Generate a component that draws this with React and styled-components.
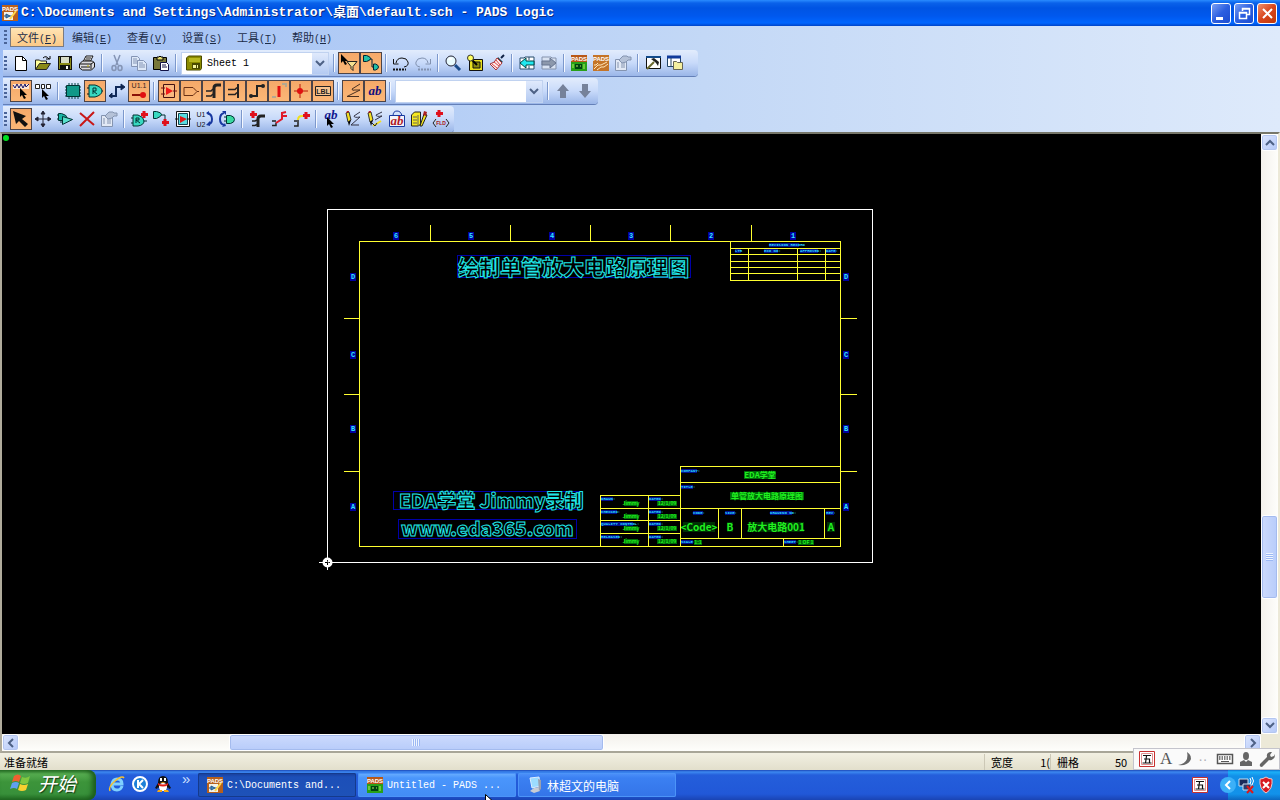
import React, { useState } from "react";
import styled, { createGlobalStyle } from "styled-components";

const mono = `"Liberation Mono", "Noto Sans CJK SC", monospace`;
const cjk = `"Noto Sans CJK SC", "Liberation Sans", sans-serif`;

/* ---------- icons, all on a 16 x 16 grid ---------- */

const cursor = (x, y) => (
  <path d={`M${x} ${y}v9l2-2 2 4 2-1-2-3h3z`} fill="#000" />
);
const plus = (x, y) => (
  <path d={`M${x} ${y}v7M${x - 3} ${y + 3.5}h7`} stroke="#e0101c" strokeWidth="3" />
);
const pencil = (
  <g>
    <path d="M1 2l3-1 2 8-3 2z" fill="#f5e020" stroke="#333" />
    <path d="M3 11l3-2-2 6z" fill="#000" />
    <path d="M1 2l3-1v-1h-2z" fill="#b22" />
  </g>
);

const icons = {
  newFile: (
    <g>
      <path d="M2.5 1.5h7l4 4v10h-11z" fill="#fff" stroke="#000" />
      <path d="M9.5 1.5v4h4" fill="none" stroke="#000" />
    </g>
  ),
  open: (
    <g>
      <path d="M0.5 14V5h4l1 1h6v3" fill="#ffff9a" stroke="#222" />
      <path d="M0.5 14.5l4-6h11l-4 6z" fill="#8a8a18" stroke="#222" />
      <path d="M8 3q3-3 6 1m1-3v3h-4" fill="none" stroke="#000" />
    </g>
  ),
  save: (
    <g>
      <path d="M1 1h14v14H1z" fill="#111" />
      <path d="M2 2h1v12H2zM13 3h1v11h-1z" fill="#8a8a18" />
      <path d="M4 2h8v6H4z" fill="#d8dcc8" />
      <path d="M3 8h10v2H3z" fill="#8a8a18" />
      <path d="M9 11h2v3H9z" fill="#fff" />
    </g>
  ),
  print: (
    <g stroke="#111" fill="#fff">
      <path d="M4 7l3-6h7l-3 6z" />
      <path d="M7 3h5M6 5h5" />
      <path d="M0.5 9l3-3h10l2 2v4l-3 3h-9l-3-2z" fill="#dcdce0" />
      <path d="M1 9h11l3-2M12 9v5M2 12h9" fill="none" />
      <path d="M8 11h2" stroke="#c0b000" />
    </g>
  ),
  cut: (
    <g fill="none" stroke="#8494b4" strokeWidth="1.5">
      <path d="M5 0l4 10M11 0l-4 10" />
      <ellipse cx="5" cy="13" rx="2" ry="2.5" />
      <ellipse cx="11" cy="13" rx="2" ry="2.5" />
    </g>
  ),
  copy: (
    <g fill="#dde8f8" stroke="#8494b4">
      <path d="M0.5 1.5h6l2 2v8h-8z" />
      <path d="M2 4h4M2 6h5M2 8h4" />
      <path d="M6.5 5.5h6l3 3v7h-9z" />
      <path d="M8 8h4M8 10h6M8 12h6" />
    </g>
  ),
  paste: (
    <g stroke="#000">
      <path d="M0.5 2.5h13v12h-13z" fill="#77773a" />
      <path d="M4 5V2h2l1-1 1 1h2v3z" fill="#e8e070" />
      <path d="M7.5 7.5h6l2 2v6h-8z" fill="#fff" stroke="#114" />
      <path d="M9 10h4M9 12h5" stroke="#114" />
    </g>
  ),
  sheet: (
    <g>
      <path d="M0.5 3l2-2h13v12l-1 2h-14z" fill="#8c8c00" stroke="#4a4a00" />
      <path d="M3 3h11v4H3z" fill="#b8b820" />
      <path d="M6 8h8v6H6z" fill="#4a4a00" />
      <path d="M7 10h3v3H7zM11 10h1v3h-1z" fill="#f5f5a0" />
    </g>
  ),
  filter: (
    <g>
      {cursor(0, -1)}
      <path d="M6 6.5h10l-4 5v4l-2-2v-2z" fill="#f5e090" stroke="#222" />
    </g>
  ),
  nets: (
    <g stroke="#023">
      <path d="M0.5 0.5h3q4 1 4 3t-4 3h-3z" fill="#20c0a8" />
      <path d="M7 4h2v8h2" fill="none" />
      <path d="M10.5 9h2q3 1 3 3t-3 3h-2z" fill="#20c0a8" />
    </g>
  ),
  undo: (
    <g fill="none" stroke="#111">
      <path d="M3 8q1-5 6-5t6 4-4 5" />
      <path d="M0.5 4v5h5" />
      <path d="M0 14.5h13" strokeWidth="2" strokeDasharray="2 1" />
    </g>
  ),
  redo: (
    <g fill="none" stroke="#8292b0">
      <path d="M13 8q-1-5-6-5t-6 4 4 5" />
      <path d="M15.5 4v5h-5" />
      <path d="M3 14.5h13" strokeWidth="2" strokeDasharray="2 1" />
    </g>
  ),
  zoom: (
    <g>
      <path d="M10 10l5 5" stroke="#174a8a" strokeWidth="3" />
      <circle cx="6" cy="6" r="5" fill="#e8fbff" stroke="#223" />
      <path d="M4 5q1-2 3-1" fill="none" stroke="#fff" strokeWidth="2" />
    </g>
  ),
  board: (
    <g>
      <path d="M2.5 4.5h13v11h-13z" fill="#e8e020" stroke="#111" />
      <path d="M6 7h7v6H6z" fill="#8a8a10" stroke="#111" />
      <path d="M5 5l5 5" stroke="#000" strokeWidth="2" />
      <circle cx="3.5" cy="3" r="3" fill="#ffff60" stroke="#333" />
    </g>
  ),
  brush: (
    <g>
      <path d="M12 3l3-3" stroke="#124" strokeWidth="2" />
      <path d="M9 2l5 5-2 1-4-4z" fill="#245" />
      <path d="M8 3l5 5-6 7-6-6q5-1 7-6z" fill="#fbeaec" stroke="#a33" />
      <path d="M3 9l5 4M5 7l5 4M7 5l4 5" stroke="#d44" />
    </g>
  ),
  back: (
    <g>
      <path d="M1 3h4l1-1h9v12H1z" fill="#fff" stroke="#244a6a" />
      <path d="M1 8l6-5v3h8v4H7v3z" fill="#20e8f0" stroke="#044" />
      <path d="M10 2v3M10 11v3" stroke="#244a6a" />
    </g>
  ),
  forward: (
    <g>
      <path d="M1 2h9l1 1h4v11H1z" fill="#d8e2f2" stroke="#8492ac" />
      <path d="M15 8L9 3v3H1v4h8v3z" fill="#8c98ac" stroke="#667490" />
    </g>
  ),
  padsLayout: (
    <g>
      <path d="M0 0h16v16H0z" fill="#b85818" />
      <path d="M0 7h16v9H0z" fill="#28a018" />
      <path d="M4 9h7v5H4z" fill="#041" />
      <path d="M2 9v4M13 9v5M5 11h2M9 11h1" stroke="#b0f060" />
      <text x="8" y="6" textAnchor="middle" fontSize="6" fontWeight="700" fill="#fff">
        PADS
      </text>
    </g>
  ),
  padsRouter: (
    <g>
      <path d="M0 0h16v16H0z" fill="#c47428" />
      <path d="M1 14l4-4h3l6-3M4 15l4-3h3l4-3M1 10h2l2-2" fill="none" stroke="#ffe6b8" />
      <text x="8" y="6" textAnchor="middle" fontSize="6" fontWeight="700" fill="#fff">
        PADS
      </text>
    </g>
  ),
  padsLogic: (
    <g>
      <path d="M0 0h16v16H0z" fill="#b8601c" />
      <path d="M2 7h9v8H2z" fill="#f2f2ea" />
      <path d="M4 9l4 2-4 2zM2 11h2M8 11h2" fill="#4a90c0" stroke="#258" />
      <path d="M8 14l6-8" stroke="#ffd84a" strokeWidth="2" />
      <text x="8" y="6" textAnchor="middle" fontSize="6" fontWeight="700" fill="#fff">
        PADS
      </text>
    </g>
  ),
  properties: (
    <g fill="#e2e9f5" stroke="#8494b0">
      <path d="M0.5 4.5h11v11h-11z" />
      <path d="M2 8h2M6 8h4M2 10h2M6 10h4M2 12h2M6 12h4" />
      <path d="M4 5l4-4h4l1 1h3v3h-3l-2 2-4 1-2-2z" fill="#b5c2d8" />
    </g>
  ),
  hammer: (
    <g>
      <path d="M1.5 1.5h14v12h-14z" fill="#fff" stroke="#111" />
      <path d="M1 2h15" stroke="#124a8a" strokeWidth="2" />
      <path d="M2 14l7-7" stroke="#6a6a30" strokeWidth="2" />
      <path d="M6 4l3-1 5 4-1 4-2-3-1-1z" fill="#222" />
    </g>
  ),
  windows: (
    <g>
      <path d="M0.5 1.5h13v10h-13z" fill="#fff" stroke="#246" />
      <path d="M0 2h14" stroke="#103a9a" strokeWidth="3" />
      <path d="M4 3v8" stroke="#246" />
      <path d="M6.5 14.5v-8h3l1 1h5v7z" fill="#f5f0a0" stroke="#665" />
    </g>
  ),
  selectAny: (
    <g>
      <path d="M0 1h16v5H0z" fill="#fff" opacity="0.7" />
      <path d="M0 2l2 3 2-4 2 4 2-4 2 4 2-4 1 3 3-3" fill="none" stroke="#12126a" />
      {cursor(7, 5)}
    </g>
  ),
  selectParts: (
    <g>
      <path d="M0.5 1.5h4v4h-4zM6.5 1.5h3v4h-3zM11.5 1.5h4v4h-4z" fill="#fff" stroke="#222" />
      {cursor(7, 6)}
    </g>
  ),
  chip: (
    <g>
      <path d="M4 0v16M7 0v16M10 0v16M13 0v16M0 4h16M0 7h16M0 10h16M0 13h16" stroke="#044" />
      <path d="M1.5 2.5h13v11h-13z" fill="#109888" stroke="#033" />
    </g>
  ),
  gateR: (
    <g>
      <path d="M0 5h3M0 11h3M14 8h2" stroke="#111" />
      <path d="M2 2h6q7 2 7 6t-7 6H2z" fill="#38d8c0" stroke="#033" />
      <path d="M6 11V5h3v3H6l4 3" fill="none" stroke="#033" />
    </g>
  ),
  net: (
    <g fill="none" stroke="#102a5a">
      <path d="M1 13h6V4h6" strokeWidth="2" />
      <path d="M3 10l-3 3 3 2zM12 1l4 3-4 3z" fill="#124" />
    </g>
  ),
  pinName: (
    <g>
      <text x="8" y="5" textAnchor="middle" fontSize="7" fill="#322">
        U1.1
      </text>
      <path d="M1 12h10" stroke="#8a1208" strokeWidth="2" />
      <circle cx="12" cy="12" r="3" fill="#e01010" />
    </g>
  ),
  hier: (
    <g>
      <path d="M2.5 1.5h11v13h-11z" fill="#f8b880" stroke="#411" />
      <path d="M0 5h4M0 11h4M12 8h4" stroke="#711" />
      <path d="M5 4l7 4-7 4z" fill="#f01818" />
    </g>
  ),
  offPage: <path d="M1 4.5h9l4 4-4 4H1zM14 8.5h2" fill="none" stroke="#6a3014" />,
  bus: (
    <g fill="none" stroke="#222">
      <path d="M9 15V5q0-3 3-3h4" strokeWidth="3" />
      <path d="M1 8h5l2-2M1 13h5l2-2" strokeWidth="1.5" />
    </g>
  ),
  busSplit: (
    <g fill="none" stroke="#222">
      <path d="M11 1v14" strokeWidth="2" />
      <path d="M1 6.5h7l2-2M1 11.5h7l2-2" strokeWidth="1.5" />
    </g>
  ),
  wire: (
    <g fill="none" stroke="#222">
      <path d="M2 13h6V3h6" strokeWidth="2" />
      <circle cx="2" cy="13" r="2" fill="#222" stroke="none" />
      <circle cx="14" cy="3" r="2" fill="#222" stroke="none" />
    </g>
  ),
  pin: (
    <g>
      <path d="M8 3v11" stroke="#e01010" strokeWidth="3" />
      <path d="M11 1h4v3M1 14h4" stroke="#b4a890" strokeWidth="2" fill="none" />
    </g>
  ),
  junction: (
    <g>
      <path d="M7 1v14M1 8h14" stroke="#b81808" />
      <circle cx="7" cy="8" r="3" fill="#e01010" />
    </g>
  ),
  label: (
    <g>
      <path d="M0.5 3.5h15v9h-15z" fill="#f8c490" stroke="#222" />
      <text x="8" y="11" textAnchor="middle" fontSize="7" fontWeight="700" fill="#222">
        LBL
      </text>
    </g>
  ),
  lines: <path d="M15 1L7 6q0 2 3 1h5L2 13.5h12" fill="none" stroke="#4a3020" />,
  ab: (
    <text
      x="8"
      y="12"
      textAnchor="middle"
      fontFamily="Liberation Serif, serif"
      fontSize="13"
      fontStyle="italic"
      fontWeight="700"
      fill="#101080"
    >
      ab
    </text>
  ),
  up: <path d="M8 1l6 7h-3v7H5V8H2z" fill="#76829a" />,
  down: <path d="M8 15l6-7h-3V1H5v7H2z" fill="#76829a" />,
  arrow: <path d="M0 0l3 13 3-3 6 6 3-3-6-5 4-3z" fill="#111" />,
  move: (
    <g stroke="#223" fill="#223">
      <path d="M8 1v14M1 8h14" />
      <path d="M8 0l2 3H6zM8 16l2-3H6zM0 8l3-2v4zM16 8l-3-2v4z" />
    </g>
  ),
  gates: (
    <g>
      <path d="M1.5 2.5h3q5 1 6 5l-5 2h-4z" fill="#19b5a5" stroke="#033" />
      <path d="M5.5 5.5l10 3-10 5z" fill="#58e0cc" stroke="#033" />
      <path d="M0 4h2M0 8h2M3 11h3" stroke="#033" />
    </g>
  ),
  remove: (
    <path d="M1 2l14 12M15 1L1 15" stroke="#c81818" strokeWidth="2" fill="none" />
  ),
  addPart: (
    <g>
      <path d="M0 7h3M0 12h3M12 10h4" stroke="#033" />
      <path d="M2 4h5q6 2 6 6t-6 5H2z" fill="#38d8c0" stroke="#033" />
      <path d="M5 12V7h3v2H5l4 3" fill="none" stroke="#033" />
      {plus(13, 0)}
    </g>
  ),
  addNet: (
    <g>
      <path d="M0.5 0.5h3q5 1 5 3t-5 4h-3z" fill="#38d8c0" stroke="#033" />
      <path d="M8 4h4v5" fill="none" stroke="#033" />
      {plus(12, 8)}
    </g>
  ),
  addHier: (
    <g>
      <path d="M1.5 0.5h13v15h-13z" fill="#fff" stroke="#111" />
      <path d="M3.5 2.5h9v11h-9z" fill="#58dce0" stroke="#145" />
      <path d="M5 5l7 3-7 4z" fill="#e01818" />
      <path d="M0 8h3M12 8h4" stroke="#111" />
    </g>
  ),
  swapRef: (
    <g>
      <text x="4" y="6" textAnchor="middle" fontSize="7" fill="#111">
        U1
      </text>
      <text x="4" y="16" textAnchor="middle" fontSize="7" fill="#111">
        U2
      </text>
      <path d="M10 2q5 1 5 6t-4 5" fill="none" stroke="#1838a0" strokeWidth="2" />
      <path d="M9 14l4-4v5zM9 2l3-2v4z" fill="#1838a0" />
    </g>
  ),
  swapPin: (
    <g>
      <path d="M5 2Q1 3 1 8t4 6" fill="none" stroke="#1838a0" strokeWidth="2" />
      <path d="M3 0h4v4zM7 15l-4 1 3-4z" fill="#1838a0" />
      <path d="M7.5 4.5h4q4 1 4 4t-4 4h-4z" fill="#38d8a0" stroke="#033" />
      <path d="M5 6h2M5 10h2" stroke="#033" />
    </g>
  ),
  addBus: (
    <g fill="none">
      {plus(4, 0)}
      <path d="M9 16V8q0-3 3-3h4" stroke="#222" strokeWidth="3" />
      <path d="M3 10h3l2-1M3 14.5h3l2-1" stroke="#222" strokeWidth="1.5" />
    </g>
  ),
  splitBus: (
    <g fill="none">
      <path d="M1 10h4M1 14.5h4v-3" stroke="#222" strokeWidth="1.5" />
      <path d="M5 12l6-4V4" stroke="#e01828" strokeWidth="2" />
      <path d="M11 5V1M11 2l4-1M12 5h4" stroke="#e01828" strokeWidth="2" />
    </g>
  ),
  extendBus: (
    <g fill="none">
      <path d="M1 10h3M1 15h4v-6" stroke="#222" strokeWidth="1.5" />
      <path d="M5 9q0-4 4-4h3" stroke="#f0e020" strokeWidth="2" />
      {plus(13, 1)}
    </g>
  ),
  addText: (
    <g>
      <text
        x="8"
        y="8"
        textAnchor="middle"
        fontFamily="Liberation Serif, serif"
        fontSize="13"
        fontStyle="italic"
        fontWeight="700"
        fill="#101890"
      >
        ab
      </text>
      {cursor(4, 6)}
    </g>
  ),
  draw: (
    <g>
      {pencil}
      <path d="M15 1L9 5q0 2 6 1l-9 8h8" fill="none" stroke="#334" />
    </g>
  ),
  redraw: (
    <g>
      {pencil}
      <path d="M15 1L9 4q0 2 6 1L8 9" fill="none" stroke="#334" />
      <path d="M6 15l8-5" stroke="#f5e020" strokeWidth="2" />
      <path d="M4 11l4 4 2-3" fill="none" stroke="#222" />
    </g>
  ),
  textBox: (
    <g>
      <path d="M4 5q0-5 4-5t5 5" fill="none" stroke="#1838a0" />
      <path d="M0.5 4.5h15v11h-15z" fill="#f4f4fa" stroke="#1838a0" />
      <text
        x="8"
        y="14"
        textAnchor="middle"
        fontFamily="Liberation Serif, serif"
        fontSize="13"
        fontStyle="italic"
        fontWeight="700"
        fill="#b01828"
      >
        ab
      </text>
    </g>
  ),
  library: (
    <g>
      <path d="M0.5 4l3-3h6v12l-2 2h-7z" fill="#f5e820" stroke="#222" />
      <path d="M2 6h4M2 9h4M2 12h4M7 4v11" stroke="#665" />
      <path d="M9 15l4-12 3 1-5 11z" fill="#f5e820" stroke="#222" />
      <path d="M13 0l3 1-1 4-3-1z" fill="#a22" />
    </g>
  ),
  field: (
    <g>
      {plus(6, -1)}
      <path d="M3 8l-3 4 3 4M13 8l3 4-3 4" fill="none" stroke="#222" />
      <text x="8" y="14" textAnchor="middle" fontSize="5" fontWeight="700" fill="#a11">
        FLD
      </text>
    </g>
  ),
  ie: (
    <g fill="none">
      <path d="M13 10q-1 4-5 4-5 0-5-6 1-5 5-5 5 0 5 5H4" stroke="#7fd0ff" strokeWidth="3" />
      <path d="M1 15Q-1 11 6 5t9-3" stroke="#f5c030" strokeWidth="1.5" />
    </g>
  ),
  kugou: (
    <g>
      <circle cx="8" cy="8" r="7" fill="#1c80d8" stroke="#fff" strokeWidth="2" />
      <path d="M6 4v8M11 4L7 8l4 4" fill="none" stroke="#fff" strokeWidth="2" />
    </g>
  ),
  qq: (
    <g>
      <path d="M3 7q0-7 5-7t5 7l3 5-2 1-1-2-2 3H5l-2-3-1 2-2-1z" fill="#111" />
      <ellipse cx="8" cy="11" rx="4" ry="4" fill="#fff" />
      <path d="M3 7q5 3 10 0v2q-5 3-10 0z" fill="#e02018" />
      <path d="M6 2v3M10 2v3" stroke="#fff" strokeWidth="2" />
      <path d="M5 6h6l-3 1zM3 14h4v2H2zM9 14h4l1 2H9z" fill="#f5a818" />
    </g>
  ),
  computer: (
    <g>
      <path d="M3 1l9-1 1 9-8 2z" fill="#9cdcff" stroke="#dceeff" />
      <path d="M7 11l5-1 1 4-6 2-4-2z" fill="#c8ccd4" />
      <path d="M11 2l3 1v9l-2 2z" fill="#98a0b0" />
    </g>
  ),
  wubi: (
    <g>
      <path d="M0.5 0.5h15v15h-15z" fill="#fff" stroke="#c83030" />
      <path d="M2.5 2.5h11v11h-11z" fill="#fff" stroke="#e09090" />
      <path d="M4 4.5h8M7.5 5l-1 7M5 8h5.500v4M3.5 12h9" fill="none" stroke="#111" strokeWidth="1.2" />
    </g>
  ),
  moon: <path d="M10 1q6 4 3 9t-12 4q7-1 9-6 1-4 0-7z" fill="#666" />,
  keyboard: (
    <g>
      <path d="M0.5 3.5h15v9h-15z" fill="#fff" stroke="#555" strokeWidth="1.5" />
      <path d="M2 6h12M2 8h12" stroke="#555" strokeWidth="1.5" strokeDasharray="1.5 1" />
      <path d="M4 10.5h8" stroke="#555" />
    </g>
  ),
  person: (
    <g fill="#666">
      <ellipse cx="8" cy="5" rx="3" ry="4" />
      <path d="M2 15v-4l4-2 2 2 2-2 4 2v4z" />
    </g>
  ),
  wrench: (
    <path d="M1 13l7-7q-1-4 3-5l2 0-2 3 1 2 3-1 0-2q2 3-1 5-2 2-4 1l-7 7q-3 0-2-3z" fill="#666" />
  ),
  network: (
    <g>
      <path d="M0 2h9v7H0z" fill="#1a2a5a" stroke="#cde" />
      <path d="M4 7h8v6H4z" fill="#2a3a6a" stroke="#cde" />
      <path d="M11 1q2 3 0 6M13 0q3 4 0 8" fill="none" stroke="#fff" />
      <path d="M8 9l6 7M14 9l-6 7" stroke="#e01818" strokeWidth="2" />
    </g>
  ),
  shield: (
    <g>
      <path d="M8 0q3 2 6 2 1 10-6 14Q1 12 2 2q3 0 6-2z" fill="#d81820" stroke="#f0c8c8" />
      <path d="M5 5l6 6M11 5l-6 6" stroke="#fff" strokeWidth="2" />
    </g>
  ),
};

const Icon = ({ name, size = 16 }) => (
  <svg
    width={size}
    height={size}
    viewBox="0 0 16 16"
    overflow="visible"
    fontFamily="Liberation Sans, sans-serif"
    aria-hidden="true"
  >
    {icons[name]}
  </svg>
);

const Chevron = ({ dir }) => {
  const d = {
    up: "M1 7l4-4 4 4",
    down: "M1 3l4 4 4-4",
    left: "M7 1L3 5l4 4",
    right: "M3 1l4 4-4 4",
  }[dir];
  return (
    <svg width="10" height="10" viewBox="0 0 10 10" aria-hidden="true">
      <path d={d} fill="none" stroke="#4d6185" strokeWidth="2" />
    </svg>
  );
};

/* ---------- data ---------- */

const menus = [
  ["文件", "F"],
  ["编辑", "E"],
  ["查看", "V"],
  ["设置", "S"],
  ["工具", "T"],
  ["帮助", "H"],
];

// "|" is a separator, a leading "*" marks a button that is switched on
const standardBar =
  "newFile open save print | cut copy paste | @sheet | *filter *nets | undo redo | zoom board brush | back forward | padsLayout padsRouter properties | hammer windows";
const filterBar =
  "*selectAny selectParts | chip *gateR net *pinName | *hier *offPage *bus *busSplit *wire *pin *junction *label | *lines *ab | @find | up down";
const editBar =
  "*arrow move gates remove properties | addPart addNet addHier swapRef swapPin | addBus splitBus extendBus | addText draw redraw textBox library field";

const topZones = [
  ["6", 69],
  ["5", 144],
  ["4", 225],
  ["3", 304],
  ["2", 384],
  ["1", 466],
];
const sideZones = [
  ["D", 68],
  ["C", 146],
  ["B", 220],
  ["A", 298],
];

// x, y, text
const captions = [
  [442, 37, "REVISION RECORD"],
  [408, 43, "LTR"],
  [437, 43, "ECO NO:"],
  [473, 43, "APPROVED:"],
  [499, 43, "DATE:"],
  [274, 291, "DRAWN:"],
  [322, 291, "DATED:"],
  [274, 304, "CHECKED:"],
  [322, 304, "DATED:"],
  [274, 316, "QUALITY CONTROL:"],
  [322, 316, "DATED:"],
  [274, 329, "RELEASED:"],
  [322, 329, "DATED:"],
  [354, 263, "COMPANY:"],
  [354, 279, "TITLE:"],
  [366, 305, "CODE:"],
  [398, 305, "SIZE:"],
  [443, 305, "DRAWING NO:"],
  [499, 305, "REV:"],
  [354, 334, "SCALE:"],
  [457, 334, "SHEET:"],
];

// centre x, baseline y, size, box width, text
const values = [
  [433, 269, 8, 32, "EDA学堂"],
  [440, 290, 8, 74, "单管放大电路原理图"],
  [372, 322, 10, 32, "<Code>"],
  [403, 322, 10, 6, "B"],
  [449, 322, 10, 56, "放大电路001"],
  [504, 322, 10, 8, "A"],
  [304, 296, 5, 14, "Jimmy"],
  [304, 309, 5, 14, "Jimmy"],
  [304, 321, 5, 14, "Jimmy"],
  [304, 334, 5, 14, "Jimmy"],
  [340, 296, 5, 20, "12/1/09"],
  [340, 309, 5, 20, "12/1/09"],
  [340, 321, 5, 20, "12/1/09"],
  [340, 334, 5, 20, "12/1/09"],
  [371, 335, 5, 8, "1:1"],
  [479, 335, 5, 16, "1 OF 1"],
];

/* ---------- parts ---------- */

const Toolbar = ({ label, items, tail = 2 }) => {
  const [find, setFind] = useState("");
  return (
    <Strip role="toolbar" aria-label={label} $tail={tail}>
      <Grip />
      {items.split(" ").map((item, i) => {
        if (item === "|") return <Separator key={i} />;
        if (item === "@sheet")
          return (
            <Combo key={i}>
              <ComboIcon>
                <Icon name="sheet" />
              </ComboIcon>
              <ComboSelect aria-label="Sheet" $icon defaultValue="1">
                <option value="1">Sheet 1</option>
              </ComboSelect>
              <ComboArrow>
                <Chevron dir="down" />
              </ComboArrow>
            </Combo>
          );
        if (item === "@find")
          return (
            <Combo key={i}>
              <ComboSelect
                aria-label="Find"
                value={find}
                onChange={(e) => setFind(e.target.value)}
              >
                <option value=""></option>
              </ComboSelect>
              <ComboArrow>
                <Chevron dir="down" />
              </ComboArrow>
            </Combo>
          );
        const on = item[0] === "*";
        const name = on ? item.slice(1) : item;
        return (
          <ToolButton key={i} $on={on} aria-label={name} aria-pressed={on}>
            <Icon name={name} />
          </ToolButton>
        );
      })}
    </Strip>
  );
};

const Schematic = () => (
  <Drawing viewBox="-325 -75 1259 600" role="img" aria-label="Schematic sheet">
    <circle cx="-321" cy="-71" r="3" fill="#00e020" />

    <g fill="none" shapeRendering="crispEdges">
      <rect x="0.5" y="0.5" width="545" height="353" stroke="#fff" />
      <g stroke="#ffff30">
        <rect x="32.5" y="32.5" width="481" height="305" />
        <path d="M103.5 16v16M183.5 16v16M263.5 16v16M343.5 16v16M424.5 16v16" />
        <path d="M17 109.5h15M17 185.5h15M17 262.5h15M514 109.5h16M514 185.5h16M514 262.5h16" />
        <path d="M403.5 32v39.5H513M403 39.5h110M403 45.5h110M403 52.5h110M403 58.5h110M403 64.5h110" />
        <path d="M421.5 39v32M470.5 39v32M498.5 39v32" />
        <path d="M353.5 337V257.5H513M353 273.5h160M273 299.5h240M353 329.5h160" />
        <path d="M391.5 299v30M414.5 299v30M497.5 299v30M456.5 329v8" />
        <path d="M273.5 337V286.5H353M273 311.5h80M273 324.5h80M321.5 286v51" />
      </g>
      <g stroke="#0000a8">
        <rect x="130.5" y="46.5" width="233" height="22" />
        <rect x="66.5" y="282.5" width="189" height="18" />
        <rect x="71.5" y="310.5" width="178" height="19" />
      </g>
    </g>

    {topZones.map(([t, x]) => (
      <Zone key={t} x={x} y={27} text={t} />
    ))}
    {sideZones.map(([t, y]) => (
      <React.Fragment key={t}>
        <Zone x={26} y={y} text={t} />
        <Zone x={519} y={y} text={t} />
      </React.Fragment>
    ))}

    {captions.map(([x, y, t]) => (
      <g key={`${x}-${y}`}>
        <rect x={x} y={y - 3} width={t.length * 2} height="4" fill="#001090" />
        <Caption x={x} y={y}>
          {t}
        </Caption>
      </g>
    ))}
    {values.map(([x, y, size, width, t]) => (
      <g key={`${x}-${y}`}>
        <rect
          x={x - width / 2}
          y={y - size + 1}
          width={width}
          height={size}
          fill={size < 10 ? "#006a08" : "#003004"}
        />
        <Value x={x} y={y} $size={size}>
          {t}
        </Value>
      </g>
    ))}

    <Outline x="131" y="66" $size={21}>
      绘制单管放大电路原理图
    </Outline>
    <Outline x="72" y="299" $size={19}>
      EDA学堂 Jimmy录制
    </Outline>
    <Outline x="74" y="327" $size={19}>
      www.eda365.com
    </Outline>

    <path d="M-8 353.5H7M0.5 346v15" stroke="#fff" />
    <circle cx="0.5" cy="353.5" r="5" fill="#fff" />
    <path d="M0.5 351v5M-2 353.5h5" stroke="#000" />
    <circle cx="1.5" cy="352.5" r="1" fill="#fff" />
  </Drawing>
);

const Zone = ({ x, y, text }) => (
  <g>
    <rect x={x - 3} y={y - 4} width="6" height="8" fill="#0000a0" />
    <ZoneText x={x} y={y + 2}>
      {text}
    </ZoneText>
  </g>
);

const ScrollBar = ({ vertical, before, thumb, after }) => (
  <Track $vertical={vertical}>
    <ScrollButton aria-label={vertical ? "Scroll up" : "Scroll left"}>
      <Chevron dir={vertical ? "up" : "left"} />
    </ScrollButton>
    <Space $grow={before} />
    <Thumb $grow={thumb} $vertical={vertical}>
      <Ridges $vertical={vertical} />
    </Thumb>
    <Space $grow={after} />
    <ScrollButton aria-label={vertical ? "Scroll down" : "Scroll right"}>
      <Chevron dir={vertical ? "down" : "right"} />
    </ScrollButton>
  </Track>
);

function App() {
  return (
    <Desktop>
      <GlobalStyle />
      <TitleBar>
        <Icon name="padsLogic" />
        <Title>C:\Documents and Settings\Administrator\桌面\default.sch - PADS Logic</Title>
        <WindowButton aria-label="Minimize">
          <svg width="19" height="19" viewBox="0 0 19 19">
            <path d="M4 13h7v3H4z" fill="#fff" />
          </svg>
        </WindowButton>
        <WindowButton aria-label="Restore">
          <svg width="19" height="19" viewBox="0 0 19 19" fill="none" stroke="#fff">
            <path d="M7.5 7V4.5h7v6H12M7 5h8M4.5 8.5h7v6h-7zM4 9h8" strokeWidth="1.5" />
          </svg>
        </WindowButton>
        <WindowButton aria-label="Close" $close>
          <svg width="19" height="19" viewBox="0 0 19 19">
            <path d="M5 5l9 9M14 5l-9 9" stroke="#fff" strokeWidth="2" />
          </svg>
        </WindowButton>
      </TitleBar>

      <Dock>
        <MenuBar>
          <Grip />
          {menus.map(([name, key], i) => (
            <MenuButton key={key} $on={i === 0}>
              {name}
              <Latin>
                (<u>{key}</u>)
              </Latin>
            </MenuButton>
          ))}
        </MenuBar>
        <Toolbar label="Standard" items={standardBar} tail={12} />
        <Toolbar label="Selection filter" items={filterBar} />
        <Toolbar label="Schematic editing" items={editBar} />
      </Dock>

      <Workspace>
        <Schematic />
        <ScrollBar vertical before={365} thumb={83} after={118} />
        <ScrollBar before={210} thumb={374} after={641} />
        <Corner />
      </Workspace>

      <StatusBar>
        <StatusText>准备就绪</StatusText>
        <StatusCell $width={66}>
          宽度
          <span>1(</span>
        </StatusCell>
        <StatusCell $width={230}>
          栅格
          <GridValue>50</GridValue>
        </StatusCell>
      </StatusBar>

      <Taskbar>
        <StartButton>
          <svg width="22" height="20" viewBox="0 0 22 20" aria-hidden="true">
            <path d="M4 3q4-3 7 0L9 9q-3-2-7 0z" fill="#f06030" />
            <path d="M12 4q4 2 8-1l-2 7q-4 2-8 0z" fill="#80c840" />
            <path d="M2 10q4-2 7 0l-2 6q-3-2-7 0z" fill="#60a0f0" />
            <path d="M10 11q4 2 8 0l-2 6q-4 2-8 0z" fill="#f8d030" />
          </svg>
          开始
        </StartButton>
        <QuickLaunch>
          <QuickButton aria-label="Internet Explorer">
            <Icon name="ie" />
          </QuickButton>
          <QuickButton aria-label="Music">
            <Icon name="kugou" />
          </QuickButton>
          <QuickButton aria-label="QQ">
            <Icon name="qq" />
          </QuickButton>
          <More>»</More>
        </QuickLaunch>
        <Tasks>
          <TaskButton $state="pressed">
            <Icon name="padsLogic" />
            <Latin>C:\Documents and...</Latin>
          </TaskButton>
          <TaskButton $state="hover">
            <Icon name="padsLayout" />
            <Latin>Untitled - PADS ...</Latin>
          </TaskButton>
          <TaskButton>
            <Icon name="computer" />
            林超文的电脑
          </TaskButton>
        </Tasks>
        <Language>
          <Icon name="wubi" />
        </Language>
        <Tray>
          <Expand aria-label="Show hidden icons">
            <svg width="16" height="16" viewBox="0 0 16 16">
              <circle cx="8" cy="8" r="8" fill="#3cb0f8" />
              <path d="M10 4L6 8l4 4" fill="none" stroke="#fff" strokeWidth="2" />
            </svg>
          </Expand>
          <Icon name="network" />
          <Icon name="shield" />
        </Tray>
      </Taskbar>

      <ImeBar>
        <Icon name="wubi" />
        <ImeLetter>A</ImeLetter>
        <Icon name="moon" />
        <Dots>··</Dots>
        <Icon name="keyboard" />
        <Icon name="person" />
        <Icon name="wrench" />
      </ImeBar>
      <Pointer width="12" height="19" viewBox="0 0 12 19" aria-hidden="true">
        <path d="M0.5 0.5v15l4-4 3 6 2-1-3-6h5z" fill="#fff" stroke="#000" />
      </Pointer>
    </Desktop>
  );
}

/* ---------- styles ---------- */

const GlobalStyle = createGlobalStyle`
  body {
    margin: 0;
    overflow: hidden;
  }
  *, *::before, *::after {
    box-sizing: border-box;
  }
  button {
    margin: 0;
    padding: 0;
    border: 0;
    background: none;
    color: inherit;
    font: inherit;
  }
  svg {
    display: block;
    flex: none;
  }
`;

const Desktop = styled.div`
  display: flex;
  flex-direction: column;
  height: 100vh;
  overflow: hidden;
  font: 11px ${cjk};
  color: #000;
`;

const TitleBar = styled.header`
  display: flex;
  align-items: center;
  gap: 3px;
  flex: none;
  height: 26px;
  padding: 0 3px 0 2px;
  background: linear-gradient(
    #2a8cff 0,
    #0a62ea 3px,
    #0054e3 8px,
    #0058ee 16px,
    #0066ff 23px,
    #0044c8 26px
  );
`;

const Title = styled.h1`
  flex: 1;
  margin: 0;
  font: bold 13px ${mono};
  line-height: 20px;
  color: #fff;
  text-shadow: 1px 1px #0a2a80;
  white-space: nowrap;
`;

const WindowButton = styled.button`
  width: 20px;
  height: 21px;
  border: 1px solid #fff;
  border-radius: 3px;
  display: grid;
  place-items: center;
  background: ${(p) =>
    p.$close
      ? "linear-gradient(135deg, #f0906c, #d8451c 50%, #c03808)"
      : "linear-gradient(135deg, #7a9ff4, #2c5fe0 50%, #1c4cd0)"};
`;

const Dock = styled.div`
  display: flex;
  flex-direction: column;
  align-items: flex-start;
  gap: 2px;
  flex: none;
  padding-left: 3px;
  background: linear-gradient(90deg, #9ebef5, #c3d8f6 55%, #deeafb);
`;

const MenuBar = styled.nav`
  display: flex;
  align-items: center;
  height: 22px;
`;

const MenuButton = styled.button`
  width: 54px;
  height: 20px;
  margin-right: 1px;
  line-height: 18px;
  border: 1px solid ${(p) => (p.$on ? "#7a7a80" : "transparent")};
  background: ${(p) => (p.$on ? "linear-gradient(#ffe4b4, #fbc988)" : "none")};
  color: #1c2c48;
  white-space: nowrap;
`;

const Latin = styled.span`
  font: 10px ${mono};
`;

const Strip = styled.div`
  display: flex;
  align-items: center;
  height: 26px;
  padding-right: ${(p) => p.$tail}px;
  border-radius: 0 4px 4px 0;
  background: linear-gradient(#e2ecfc, #c8dafa 50%, #9ab6e8);
  box-shadow: 0 1px #6480b8;
`;

const Grip = styled.span`
  flex: none;
  width: 3px;
  height: 15px;
  margin: 0 3px 0 1px;
  background: repeating-linear-gradient(#4a6498 0 2px, transparent 2px 4px);
`;

const Separator = styled.span`
  flex: none;
  width: 8px;
  height: 18px;
  background: linear-gradient(90deg, transparent 3px, #7c98cc 3px 4px, #f4f8ff 4px 5px, transparent 5px);
`;

const ToolButton = styled.button`
  display: grid;
  place-items: center;
  width: 22px;
  height: 22px;
  background: ${(p) => (p.$on ? "linear-gradient(#f5a868, #fbb878)" : "none")};
  box-shadow: ${(p) => (p.$on ? "inset 0 0 0 1px #4c4448" : "none")};
`;

const Combo = styled.div`
  display: grid;
  grid-template-columns: 1fr 16px;
  align-items: center;
  width: 148px;
  height: 23px;
  margin: 0 1px;
  background: #fff;
  border: 1px solid #c0d2f0;
`;

const ComboSelect = styled.select`
  grid-area: 1 / 1 / 2 / 3;
  height: 21px;
  padding: 0 16px 0 ${(p) => (p.$icon ? 25 : 4)}px;
  border: 0;
  appearance: none;
  background: transparent;
  font: 10px ${mono};
  color: #000;
`;

const ComboIcon = styled.span`
  grid-area: 1 / 1;
  padding-left: 4px;
`;

const ComboArrow = styled.span`
  grid-area: 1 / 2;
  display: grid;
  place-items: center;
  height: 21px;
  background: linear-gradient(#e0eafc, #b4caf2);
  pointer-events: none;
`;

const Workspace = styled.main`
  flex: 1;
  min-height: 0;
  display: grid;
  grid-template: minmax(0, 1fr) 17px / minmax(0, 1fr) 17px;
  border: 2px solid #ece9d8;
  border-top-color: #77776a;
  border-left-color: #b0ac9c;
  border-bottom-color: #a8a698;
`;

const Drawing = styled.svg`
  width: 100%;
  height: 100%;
  background: #000;
`;

const ZoneText = styled.text`
  font: bold 7px "Liberation Mono", monospace;
  fill: #30e8ff;
  text-anchor: middle;
`;

const Caption = styled.text`
  font: bold 4px "Liberation Mono", monospace;
  fill: #28d8ff;
`;

const Value = styled.text`
  font: bold ${(p) => p.$size}px ${cjk};
  fill: #20f020;
  text-anchor: middle;
`;

const Outline = styled.text`
  font: 900 ${(p) => p.$size}px ${cjk};
  fill: #000;
  stroke: #20e8e8;
  stroke-width: 1px;
`;

const Track = styled.div`
  display: flex;
  flex-direction: ${(p) => (p.$vertical ? "column" : "row")};
  min-width: 0;
  min-height: 0;
  background: linear-gradient(${(p) => (p.$vertical ? "90deg" : "180deg")}, #f3f1ec, #fefefb);
`;

const Space = styled.span`
  flex: ${(p) => p.$grow} 1 0;
`;

const ScrollButton = styled.button`
  flex: none;
  width: 17px;
  height: 17px;
  display: grid;
  place-items: center;
  border: 1px solid #fff;
  border-radius: 3px;
  background: linear-gradient(135deg, #dce6fe, #b4c8f8);
  box-shadow: inset 0 0 0 1px #b4c6f0;
`;

const Thumb = styled.div`
  flex: ${(p) => p.$grow} 1 0;
  display: grid;
  place-items: center;
  border: 1px solid #fff;
  border-radius: 3px;
  background: linear-gradient(${(p) => (p.$vertical ? "90deg" : "180deg")}, #ccdafd, #b8ccfa);
  box-shadow: inset 0 0 0 1px #a4bbee;
`;

const Ridges = styled.span`
  width: ${(p) => (p.$vertical ? 7 : 8)}px;
  height: ${(p) => (p.$vertical ? 8 : 7)}px;
  background: repeating-linear-gradient(
    ${(p) => (p.$vertical ? "180deg" : "90deg")},
    #eef4fe 0 1px,
    #9cb8f4 1px 2px
  );
`;

const Corner = styled.span`
  background: #ece9d8;
`;

const StatusBar = styled.footer`
  display: flex;
  align-items: center;
  flex: none;
  height: 17px;
  padding-left: 4px;
  background: linear-gradient(#f2f0e2, #e2dfcc);
  line-height: 16px;
  white-space: nowrap;
`;

const StatusText = styled.span`
  flex: 1;
`;

const StatusCell = styled.span`
  display: flex;
  justify-content: space-between;
  width: ${(p) => p.$width}px;
  padding-left: 6px;
  border-left: 1px solid #ccc8b6;
`;

const GridValue = styled.span`
  width: 165px;
`;

const Taskbar = styled.div`
  display: flex;
  align-items: stretch;
  flex: none;
  height: 30px;
  background: linear-gradient(#1c48b8 0, #3c88f0 2px, #245edb 5px, #2158d8 24px, #1a44b4);
  color: #fff;
`;

const StartButton = styled.button`
  display: flex;
  align-items: center;
  gap: 6px;
  width: 96px;
  padding: 0 0 4px 10px;
  border-radius: 0 8px 8px 0;
  background: linear-gradient(#2e7a2c, #56ac50 4px, #3c943a 12px, #38903a 24px, #226e24);
  box-shadow: inset -4px 0 5px #1c5c1c;
  font-size: 19px;
  line-height: 24px;
  font-style: italic;
  text-shadow: 1px 1px 1px #123a12;
`;

const QuickLaunch = styled.div`
  display: flex;
  align-items: center;
  gap: 7px;
  width: 102px;
  padding: 0 0 2px 13px;
`;

const QuickButton = styled.button`
  width: 16px;
  height: 16px;
`;

const More = styled.span`
  align-self: flex-start;
  padding-left: 4px;
  font: 15px "Liberation Sans", sans-serif;
  color: #cfe0ff;
`;

const Tasks = styled.div`
  display: flex;
  gap: 2px;
  flex: 1;
  min-width: 0;
  padding: 3px 0;
`;

const taskColours = {
  pressed: "linear-gradient(#183c98, #1c4fb8 4px, #1e52b8)",
  hover: "linear-gradient(#6cb0ff, #4a96fc 5px, #438cf4)",
  normal: "linear-gradient(#4e92fa, #3b80f2 5px, #3474e8)",
};

const TaskButton = styled.button`
  display: flex;
  align-items: center;
  gap: 4px;
  flex: 0 1 158px;
  padding-left: 9px;
  border-radius: 2px;
  background: ${(p) => taskColours[p.$state || "normal"]};
  box-shadow: inset 0 0 0 1px ${(p) => (p.$state === "pressed" ? "#153a8c" : "#4c94f8")};
  font-size: 12px;
  white-space: nowrap;
`;

const Language = styled.span`
  display: grid;
  place-items: center;
  width: 36px;
  margin-right: 10px;
`;

const Tray = styled.div`
  display: flex;
  align-items: center;
  gap: 3px;
  width: 52px;
  background: linear-gradient(#0c70d0 0, #1cb0f8 2px, #1290e8 6px, #1292ea 24px, #0c68c0);
`;

const Expand = styled.button`
  width: 16px;
  height: 16px;
  margin-left: -8px;
`;

const ImeBar = styled.div`
  position: fixed;
  right: 0;
  bottom: 30px;
  display: flex;
  align-items: center;
  justify-content: space-between;
  width: 147px;
  height: 22px;
  padding: 0 4px 0 5px;
  background: #fafafa;
  border: 1px solid #c4c4cc;
`;

const ImeLetter = styled.span`
  font: 17px "Liberation Serif", serif;
  color: #555;
`;

const Dots = styled.span`
  width: 14px;
  font: 14px "Liberation Sans", sans-serif;
  color: #b0b0b8;
`;

const Pointer = styled.svg`
  position: fixed;
  left: 485px;
  top: calc(100vh - 6px);
  pointer-events: none;
`;

export default App;
